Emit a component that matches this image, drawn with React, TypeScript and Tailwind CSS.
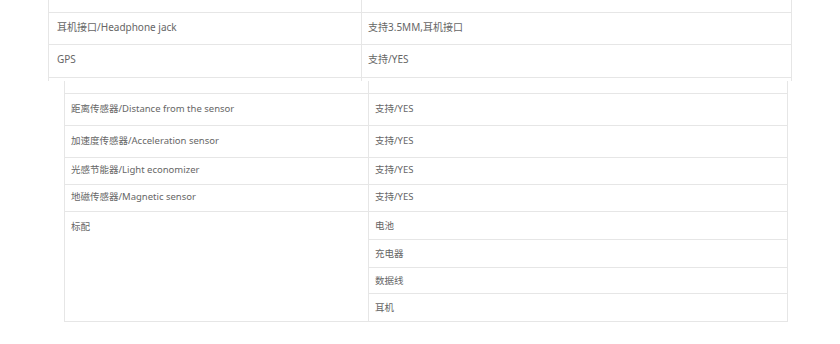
const font = { fontFamily: '"Noto Sans", "Noto Sans CJK SC", sans-serif' }

interface Row {
  label: string
  value: string
  h: string
}

const upperRows: Row[] = [
  { label: '耳机接口/Headphone jack', value: '支持3.5MM,耳机接口', h: 'h-[32px]' },
  { label: 'GPS', value: '支持/YES', h: 'h-[33px]' },
]

const sensorRows: Row[] = [
  { label: '距离传感器/Distance from the sensor', value: '支持/YES', h: 'h-[32px]' },
  { label: '加速度传感器/Acceleration sensor', value: '支持/YES', h: 'h-[32px]' },
  { label: '光感节能器/Light economizer', value: '支持/YES', h: 'h-[27px]' },
  { label: '地磁传感器/Magnetic sensor', value: '支持/YES', h: 'h-[27px]' },
]

const accessories = [
  { name: '电池', h: 'h-[28px]' },
  { name: '充电器', h: 'h-[28px]' },
  { name: '数据线', h: 'h-[26px]' },
  { name: '耳机', h: 'h-[27px]' },
]

export default function App() {
  return (
    <div className="h-[344px] w-[840px] overflow-hidden bg-white text-[#666]" style={font}>
      {/* upper spec table, cut off at the top */}
      <div className="ml-[48px] w-[744px] border-x border-[#e6e6e6] text-[10px]">
        <div className="flex h-[13px] border-b border-[#e6e6e6]">
          <div className="w-[313px] border-r border-[#e6e6e6]" />
        </div>
        {upperRows.map((r) => (
          <div key={r.label} className={`flex ${r.h} border-b border-[#e6e6e6]`}>
            <div className="flex w-[313px] items-center border-r border-[#e6e6e6] pb-[3px] pl-[8px]">
              {r.label}
            </div>
            <div className="flex flex-1 items-center pb-[3px] pl-[6px]">{r.value}</div>
          </div>
        ))}
        <div className="flex h-[3px]">
          <div className="w-[313px] border-r border-[#e6e6e6]" />
        </div>
      </div>

      {/* sensors and package contents */}
      <div className="ml-[64px] w-[724px] border-x border-b border-[#e6e6e6] text-[9.5px]">
        <div className="flex h-[13px] border-b border-[#e6e6e6]">
          <div className="w-[304px] border-r border-[#e6e6e6]" />
        </div>
        {sensorRows.map((r) => (
          <div key={r.label} className={`flex ${r.h} border-b border-[#e6e6e6]`}>
            <div className="flex w-[304px] items-center border-r border-[#e6e6e6] pb-[1px] pl-[6px]">
              {r.label}
            </div>
            <div className="flex flex-1 items-center pb-[1px] pl-[6px]">{r.value}</div>
          </div>
        ))}
        <div className="flex">
          <div className="w-[304px] border-r border-[#e6e6e6] pt-[8px] pl-[6px]">标配</div>
          <div className="flex-1">
            {accessories.map((a, i) => (
              <div
                key={a.name}
                className={`flex ${a.h} items-center pt-[2px] pl-[6px] ${
                  i < accessories.length - 1 ? 'border-b border-[#e6e6e6]' : ''
                }`}
              >
                {a.name}
              </div>
            ))}
          </div>
        </div>
      </div>
    </div>
  )
}
